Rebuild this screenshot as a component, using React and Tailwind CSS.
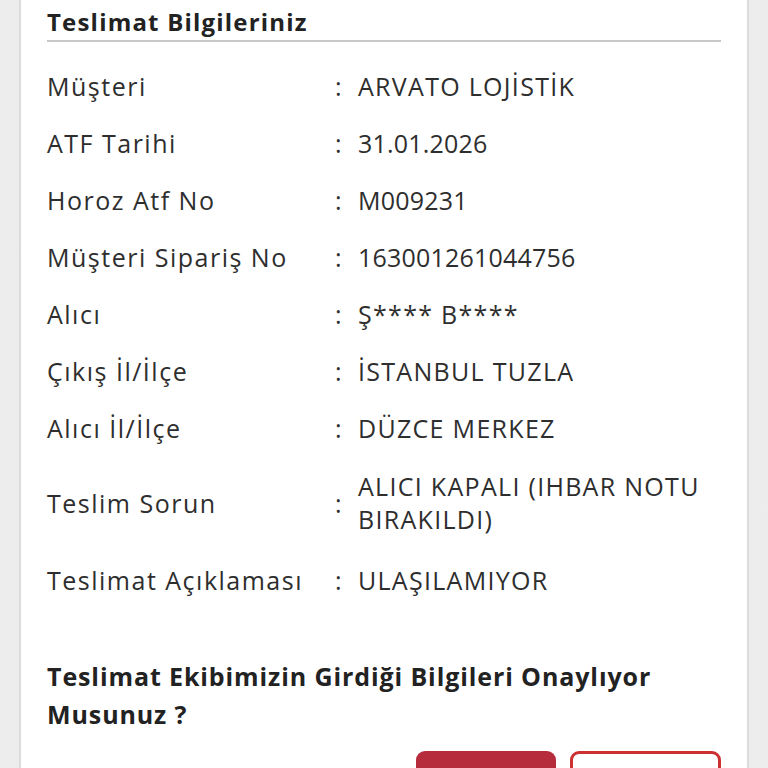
const rows = [
  ["Müşteri", "ARVATO LOJİSTİK"],
  ["ATF Tarihi", "31.01.2026", true],
  ["Horoz Atf No", "M009231", true],
  ["Müşteri Sipariş No", "163001261044756", true],
  ["Alıcı", "Ş**** B****"],
  ["Çıkış İl/İlçe", "İSTANBUL TUZLA"],
  ["Alıcı İl/İlçe", "DÜZCE MERKEZ"],
  ["Teslim Sorun", "ALICI KAPALI (IHBAR NOTU BIRAKILDI)"],
  ["Teslimat Açıklaması", "ULAŞILAMIYOR"],
];

export default function App() {
  return (
    <div
      className="h-[768px] overflow-hidden bg-gradient-to-r from-[#ececec] via-[#f7f7f7] to-[#ececec] px-[19px]"
      style={{ fontFamily: '"Open Sans", "Noto Sans", sans-serif' }}
    >
      <div className="min-h-full border-x-2 border-[#dcdcdc] bg-white px-[26px] pt-[6px] text-[#222]">
        <h2 className="border-b-2 border-[#c8c8c8] pb-[2px] text-[24px] font-bold leading-[32px] tracking-[1.2px]">
          Teslimat Bilgileriniz
        </h2>
        <div className="mt-[28px] flex flex-col gap-[24px] text-[25px] leading-[33px] text-[#2e2e2e]">
          {rows.map(([label, value, numeric], i) => (
            <div
              key={label}
              className={`flex items-center ${i === 8 ? "mt-[4px]" : ""} ${i === 7 ? "mt-[1px]" : ""}`}
            >
              <div className="w-[288px] shrink-0 tracking-[1.5px]">{label}</div>
              <div className="w-[23px] shrink-0">:</div>
              <div className={`pr-[4px] ${numeric ? "tracking-[0.2px]" : "tracking-[1.3px]"}`}>{value}</div>
            </div>
          ))}
        </div>
        <p className="mt-[60px] text-[25px] font-bold leading-[38px] tracking-[0.9px] text-[#222]">
          Teslimat Ekibimizin Girdiği Bilgileri Onaylıyor Musunuz ?
        </p>
        <div className="mt-[18px] flex justify-end gap-[14px]">
          <button className="h-[68px] w-[140px] rounded-[9px] bg-[#b72c3c] font-bold text-white">
            Evet
          </button>
          <button className="h-[68px] w-[151px] rounded-[9px] border-[3px] border-[#cc3030] bg-white font-bold text-[#cc3030]">
            Hayır
          </button>
        </div>
      </div>
    </div>
  );
}
